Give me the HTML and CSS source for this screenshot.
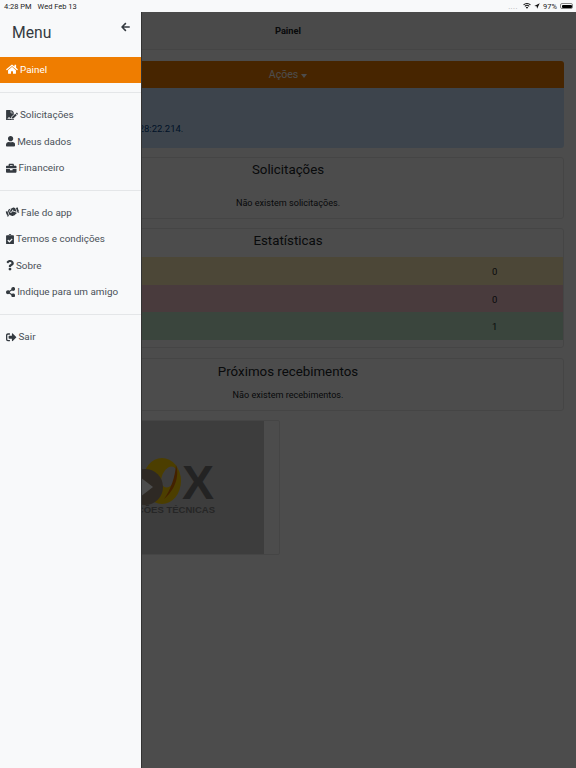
FILE: index.html
```html
<!DOCTYPE html>
<html lang="pt">
<head>
<meta charset="utf-8">
<title>Painel</title>
<link rel="stylesheet" href="styles.css">
</head>
<body>
<div class="statusbar">
  <div class="status-left"><span>4:28 PM</span><span>Wed Feb 13</span></div>
  <div class="status-right">
    <span class="signal">....</span>
    <svg class="st-wifi" viewBox="0 0 16 12"><path d="M8 11.5 5.6 8.8a3.4 3.4 0 0 1 4.8 0zM4.3 7.5 3 6a7 7 0 0 1 10 0l-1.300 1.500a5.200 5.200 0 0 0-7.400 0zM1.800 4.700.4 3.200a10.700 10.700 0 0 1 15.200 0l-1.400 1.500a8.700 8.700 0 0 0-12.400 0z"/></svg>
    <svg class="st-loc" viewBox="0 0 10 10"><path d="M9.500.5 5.200 9.500 4.400 5.600.5 4.800z"/></svg>
    <span>97%</span>
    <span class="battery"><span class="battery-fill"></span></span>
  </div>
</div>

<main class="page">
  <header class="topbar">Painel</header>
  <div class="content">
    <div class="actions">Ações <span class="caret"></span></div>
    <div class="alert">Último acesso: 13/02 16:28:22.214.</div>
    <section class="card card-sol">
      <h2>Solicitações</h2>
      <p>Não existem solicitações.</p>
    </section>
    <section class="card card-stats">
      <h2>Estatísticas</h2>
      <div class="stat stat-yellow"><span class="num">0</span></div>
      <div class="stat stat-red"><span class="num">0</span></div>
      <div class="stat stat-green"><span class="num">1</span></div>
    </section>
    <section class="card card-next">
      <h2>Próximos recebimentos</h2>
      <p>Não existem recebimentos.</p>
    </section>
    <div class="thumb">
      <div class="logo">
        <svg class="logo-mark" viewBox="0 0 60 60">
          <ellipse cx="36" cy="26" rx="19" ry="23" fill="#ffd000"/>
          <ellipse cx="43" cy="22" rx="7" ry="11" transform="rotate(25 43 22)" fill="#ccc"/>
          <path d="M50 10C54 22 48 36 38 44 45 34 49 22 50 10z" fill="#e07000"/>
          <circle cx="19" cy="32" r="18" fill="#9a8a78"/>
          <path d="M14 22l13 10-13 10z" fill="#fff"/>
        </svg>
        <span class="logo-x">X</span>
        <span class="logo-text">SOLUÇÕES TÉCNICAS</span>
      </div>
    </div>
  </div>
</main>

<div class="overlay"></div>

<aside class="drawer">
  <div class="drawer-head">
    <span class="drawer-title">Menu</span>
    <svg class="back" viewBox="0 0 448 512"><path d="M257.5 445.100l-22.200 22.200c-9.400 9.400-24.600 9.400-33.900 0L7 273c-9.400-9.400-9.400-24.600 0-33.900L201.400 44.700c9.400-9.400 24.600-9.400 33.900 0l22.200 22.200c9.500 9.500 9.300 25-.4 34.300L136.600 216H424c13.300 0 24 10.700 24 24v32c0 13.300-10.700 24-24 24H136.600l120.500 114.800c9.800 9.300 10 24.800.4 34.300z"/></svg>
  </div>
  <a class="item active">
    <svg class="ico w-home" viewBox="0 0 576 512"><path d="M280.370 148.260L96 300.110V464a16 16 0 0 0 16 16l112.060-.29a16 16 0 0 0 15.920-16V368a16 16 0 0 1 16-16h64a16 16 0 0 1 16 16v95.640a16 16 0 0 0 16 16.050L464 480a16 16 0 0 0 16-16V300L295.670 148.260a12.190 12.190 0 0 0-15.300 0zM571.600 251.470L488 182.560V44.050a12 12 0 0 0-12-12h-56a12 12 0 0 0-12 12v72.610L318.470 43a48 48 0 0 0-61 0L4.340 251.470a12 12 0 0 0-1.600 16.900l25.500 31A12 12 0 0 0 45.150 301l235.220-193.740a12.190 12.190 0 0 1 15.300 0L530.900 301a12 12 0 0 0 16.900-1.600l25.500-31a12 12 0 0 0-1.700-16.930z"/></svg>
    Painel
  </a>
  <hr class="sep sep-first">
  <a class="item">
    <svg class="ico w-sign" viewBox="0 0 576 512"><path d="M218.170 424.140c-2.950-5.920-8.090-6.520-10.170-6.520s-7.220.59-10.020 6.190l-7.670 15.340c-6.370 12.780-25.030 11.370-29.480-2.090L144 386.590l-10.610 31.880c-5.890 17.660-22.380 29.530-41 29.530H80c-8.840 0-16-7.160-16-16s7.160-16 16-16h12.390c4.830 0 9.110-3.080 10.640-7.660l18.190-54.640c3.300-9.810 12.440-16.410 22.780-16.410s19.480 6.590 22.770 16.410l13.880 41.640c19.750-16.190 54.060-9.700 66 14.160 1.890 3.780 5.490 5.950 9.360 6.260v-82.120l128-127.090V160H248c-13.200 0-24-10.800-24-24V0H24C10.700 0 0 10.700 0 24v464c0 13.300 10.700 24 24 24h336c13.300 0 24-10.700 24-24v-40l-128-.11c-16.120-.31-30.580-9.280-37.830-23.750zM384 121.900c0-6.300-2.500-12.400-7-16.900L279.100 7c-4.500-4.500-10.600-7-17-7H256v128h128v-6.100zm-96 225.060V416h68.990l161.680-162.780-67.880-67.880L288 346.960zm280.540-179.630l-31.870-31.870c-9.940-9.940-26.070-9.940-36.010 0l-27.250 27.250 67.880 67.880 27.250-27.250c9.950-9.940 9.950-26.070 0-36.010z"/></svg>
    Solicitações
  </a>
  <a class="item">
    <svg class="ico w-user" viewBox="0 0 448 512"><path d="M224 256c70.700 0 128-57.300 128-128S294.700 0 224 0 96 57.300 96 128s57.300 128 128 128zm89.600 32h-16.700c-22.200 10.200-46.900 16-72.900 16s-50.600-5.800-72.900-16h-16.700C60.200 288 0 348.200 0 422.400V464c0 26.500 21.500 48 48 48h352c26.500 0 48-21.500 48-48v-41.600c0-74.200-60.200-134.400-134.400-134.400z"/></svg>
    Meus dados
  </a>
  <a class="item">
    <svg class="ico w-brief" viewBox="0 0 512 512"><path d="M320 336c0 8.840-7.160 16-16 16h-96c-8.840 0-16-7.160-16-16v-48H0v144c0 25.600 22.400 48 48 48h416c25.600 0 48-22.400 48-48V288H320v48zm144-208h-80V80c0-25.600-22.400-48-48-48H176c-25.600 0-48 22.400-48 48v48H48c-25.600 0-48 22.400-48 48v80h512v-80c0-25.600-22.400-48-48-48zm-144 0H192V96h128v32z"/></svg>
    Financeiro
  </a>
  <hr class="sep">
  <a class="item">
    <svg class="ico w-hand" viewBox="0 0 640 512"><path d="M434.700 64h-85.900c-8 0-15.700 3-21.600 8.400l-98.300 90c-.1.100-.2.300-.3.400-16.600 15.600-16.300 40.500-2.100 56 12.700 13.900 39.400 17.600 56.100 2.700.1-.1.300-.1.400-.2l79.900-73.200c6.500-5.900 16.700-5.500 22.600 1 6 6.500 5.500 16.600-1 22.600l-26.100 23.900L504 313.800c2.900 2.400 5.500 5 7.900 7.700V128l-54.600-54.600c-5.900-6-14.100-9.400-22.600-9.400zM544 128.200v223.900c0 17.700 14.300 32 32 32h64V128.200h-96zm48 223.900c-8.800 0-16-7.200-16-16s7.200-16 16-16 16 7.200 16 16-7.200 16-16 16zM0 384h64c17.700 0 32-14.300 32-32V128.200H0V384zm48-63.900c8.800 0 16 7.200 16 16s-7.200 16-16 16-16-7.200-16-16c0-8.900 7.200-16 16-16zm435.900 18.600L334.600 217.500l-30 27.500c-29.700 27.100-75.200 24.500-101.700-4.400-26.900-29.400-24.800-74.900 4.400-101.700L289.100 64h-83.800c-8.500 0-16.600 3.400-22.600 9.400L128 128v223.900h18.300l90.500 81.900c27.400 22.300 67.700 18.100 90-9.300l.2-.2 17.900 15.500c15.900 13 39.400 10.500 52.300-5.400l31.400-38.600 5.400 4.400c13.700 11.100 33.900 9.100 45-4.700l9.500-11.700c11.200-13.800 9.100-33.900-4.600-45.100z"/></svg>
    Fale do app
  </a>
  <a class="item">
    <svg class="ico w-clip" viewBox="0 0 384 512"><path d="M336 64h-80c0-35.300-28.700-64-64-64s-64 28.700-64 64H48C21.500 64 0 85.500 0 112v352c0 26.500 21.500 48 48 48h288c26.500 0 48-21.500 48-48V112c0-26.500-21.500-48-48-48zM192 40c13.300 0 24 10.700 24 24s-10.700 24-24 24-24-10.700-24-24 10.700-24 24-24zm121.200 231.800l-143 141.800c-4.700 4.700-12.300 4.600-17-.1l-82.600-83.300c-4.700-4.700-4.600-12.300.1-17L99.100 285c4.700-4.700 12.300-4.600 17 .1l46 46.400 106-105.200c4.700-4.700 12.300-4.600 17 .1l28.200 28.400c4.700 4.800 4.600 12.300-.1 17z"/></svg>
    Termos e condições
  </a>
  <a class="item">
    <svg class="ico w-quest" viewBox="0 0 384 512"><path d="M202.021 0C122.202 0 70.503 32.703 29.914 91.026c-7.363 10.580-5.093 25.086 5.178 32.874l43.138 32.709c10.373 7.865 25.132 6.026 33.253-4.148 25.049-31.381 43.630-49.449 82.757-49.449 30.764 0 68.816 19.799 68.816 49.631 0 22.552-18.617 34.134-48.993 51.164-35.423 19.860-82.299 44.576-82.299 106.405V320c0 13.255 10.745 24 24 24h72.471c13.255 0 24-10.745 24-24v-5.773c0-42.860 125.268-44.645 125.268-160.627C377.504 66.256 286.902 0 202.021 0zM192 373.459c-38.196 0-69.271 31.075-69.271 69.271 0 38.195 31.075 69.270 69.271 69.270s69.271-31.075 69.271-69.271-31.075-69.270-69.271-69.270z"/></svg>
    Sobre
  </a>
  <a class="item">
    <svg class="ico w-share" viewBox="0 0 448 512"><path d="M352 320c-22.608 0-43.387 7.819-59.790 20.895l-102.486-64.054a96.551 96.551 0 0 0 0-41.683l102.486-64.054C308.613 184.181 329.392 192 352 192c53.019 0 96-42.981 96-96S405.019 0 352 0s-96 42.981-96 96c0 7.158.79 14.130 2.276 20.841L155.790 180.895C139.387 167.819 118.608 160 96 160c-53.019 0-96 42.981-96 96s42.981 96 96 96c22.608 0 43.387-7.819 59.790-20.895l102.486 64.054A96.301 96.301 0 0 0 256 416c0 53.019 42.981 96 96 96s96-42.981 96-96-42.981-96-96-96z"/></svg>
    Indique para um amigo
  </a>
  <hr class="sep sep-last">
  <a class="item">
    <svg class="ico w-out" viewBox="0 0 512 512"><path d="M497 273L329 441c-15 15-41 4.500-41-17v-96H152c-13.300 0-24-10.700-24-24v-96c0-13.300 10.700-24 24-24h136V88c0-21.400 25.900-32 41-17l168 168c9.300 9.400 9.300 24.600 0 34zM192 436v-40c0-6.600-5.400-12-12-12H96c-17.700 0-32-14.300-32-32V160c0-17.700 14.300-32 32-32h84c6.600 0 12-5.400 12-12V76c0-6.600-5.400-12-12-12H96c-53 0-96 43-96 96v192c0 53 43 96 96 96h84c6.600 0 12-5.400 12-12z"/></svg>
    Sair
  </a>
</aside>
</body>
</html>
```
FILE: styles.css
```css
* { box-sizing: border-box; }
html, body { height: 100%; }
body {
  margin: 0;
  height: 768px;
  overflow: hidden;
  position: relative;
  background: #fff;
  color: #212529;
  font-family: Roboto, "Liberation Sans", sans-serif;
  font-size: 10px;
}

.statusbar {
  position: relative;
  z-index: 5;
  height: 12px;
  padding: 0 3px 0 4px;
  background: #f8f9fa;
  display: flex;
  justify-content: space-between;
  align-items: center;
  font-size: 7.500px;
  color: #222;
}
.status-left { display: flex; gap: 6px; }
.status-right { display: flex; align-items: center; gap: 3px; }
.signal { color: #aaa; letter-spacing: .5px; margin-right: 2px; }
.st-wifi { width: 8px; height: 6px; fill: #111; }
.st-loc { width: 6px; height: 6px; fill: #111; }
.battery {
  width: 13px; height: 6px;
  border: .5px solid #888; border-radius: 2px;
  padding: .5px; display: block;
}
.battery-fill { display: block; height: 100%; background: #000; border-radius: 1px; }

.page { background: #fff; }
.topbar {
  height: 38px;
  background: #f8f8f8;
  border-bottom: 1px solid #e7e7e7;
  display: flex;
  align-items: center;
  justify-content: center;
  font-weight: 700;
  font-size: 9.300px;
}
.content { padding: 11px 12px 0; }

.actions {
  height: 27px;
  background: #ef7d00;
  color: #fff;
  border-radius: 3px 3px 0 0;
  display: flex;
  align-items: center;
  justify-content: center;
  gap: 3px;
  font-size: 10.500px;
}
.caret {
  width: 0; height: 0;
  margin-top: 3px;
  border-left: 3.500px solid transparent;
  border-right: 3.500px solid transparent;
  border-top: 4px solid #fff;
}
.alert {
  height: 60px;
  background: #cce5ff;
  color: #004085;
  border-radius: 0 0 3px 3px;
  padding: 34px 12px 0 21px;
  font-size: 9.500px;
  line-height: 14px;
  white-space: nowrap;
}

.card {
  margin-top: 9px;
  border: 1px solid #e8e8e8;
  border-radius: 3px;
  text-align: center;
}
.card h2 { margin: 0; font-weight: 400; font-size: 13.300px; line-height: 17px; }
.card p { margin: 0; font-size: 9.100px; line-height: 12px; }
.card-sol { height: 62px; padding-top: 3px; }
.card-sol p { margin-top: 19px; }
.card-stats { height: 120px; padding-top: 3px; }
.card-stats h2 { margin-bottom: 8px; }
.card-next { height: 53px; margin-top: 10px; padding-top: 4px; }
.card-next p { margin-top: 9px; }

.stat {
  height: 27.500px;
  display: flex;
  justify-content: flex-end;
  align-items: center;
  padding: 2px 66px 0 0;
  font-size: 9.500px;
}
.stat-yellow { background: #ffeeba; }
.stat-red { background: #f5c6cb; }
.stat-green { background: #c3e6cb; }
.num { width: 5px; }

.thumb {
  margin-top: 9px;
  width: 268px;
  height: 135px;
  border: 1px solid #e8e8e8;
  border-radius: 2px;
  padding-right: 15px;
}
.logo {
  position: relative;
  height: 100%;
  background: #ccc;
}
.logo-mark {
  position: absolute;
  left: 113px;
  top: 34px;
  width: 60px;
  height: 60px;
}
.logo-x {
  position: absolute;
  left: 169px;
  top: 44px;
  font-family: "Liberation Sans", sans-serif;
  font-size: 48px;
  line-height: 36px;
  color: #777;
  font-weight: 700;
}
.logo-text {
  position: absolute;
  right: 49px;
  top: 83px;
  font-family: "Liberation Sans", sans-serif;
  font-size: 9.500px;
  line-height: 12px;
  color: #808080;
  font-weight: 700;
  white-space: nowrap;
}

.overlay {
  position: absolute;
  inset: 12px 0 0 0;
  z-index: 2;
  background: rgba(0, 0, 0, .7);
}

.drawer {
  position: absolute;
  z-index: 3;
  top: 0;
  left: 0;
  bottom: 0;
  width: 141px;
  padding-top: 12px;
  background: #f8f9fa;
  color: #343a40;
  box-shadow: 1px 0 0 #333;
}
.drawer-head {
  height: 45px;
  display: flex;
  justify-content: space-between;
  align-items: flex-start;
  padding: 11px 11px 0 12px;
}
.drawer-title { font-size: 15.700px; line-height: 19px; }
.back { width: 9px; height: 10px; margin-top: -1px; fill: #343a40; }

.item {
  height: 26.500px;
  padding: 0 0 1px 6px;
  display: flex;
  align-items: center;
  gap: 2px;
  font-size: 9.900px;
  color: #495057;
}
.item.active { height: 26px; background: #ef7d00; color: #fff; }
.item.active .ico { fill: #fff; }
.ico { height: 10.500px; fill: #343a40; flex: none; }
.w-home { width: 12px; }
.w-sign { width: 12px; }
.w-user { width: 9.200px; }
.w-brief { width: 10.500px; }
.w-hand { width: 13px; height: 12px; transform: rotate(-20deg); }
.w-clip { width: 8px; }
.w-quest { width: 8px; }
.w-share { width: 9.200px; }
.w-out { width: 10.500px; }

.sep {
  margin: 8px 0 9px;
  border: 0;
  border-top: 1px solid #e4e6e8;
}
.sep-first { margin-top: 9px; }
.sep-last { margin: 8.500px 0 9px; }
```
